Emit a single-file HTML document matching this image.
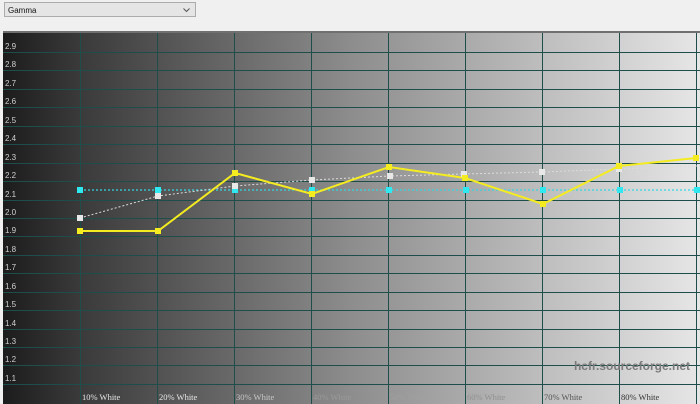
<!DOCTYPE html><html><head><style>
body{margin:0;width:700px;height:404px;background:#f0f0f0;overflow:hidden;font-family:"Liberation Sans",sans-serif;position:relative}
.sel{position:absolute;left:4px;top:2px;width:192px;height:15px;border:1px solid #acacac;background:#e5e5e5;font-size:8px;line-height:15px;box-sizing:border-box;padding-left:3px;color:#111}
</style></head><body>
<div class="sel">Gamma<svg style="position:absolute;right:5px;top:5px" width="7" height="5"><path d="M0.5 0.5L3.5 3.5L6.5 0.5" fill="none" stroke="#555" stroke-width="1"/></svg></div>
<svg style="position:absolute;left:0;top:0" width="700" height="404">
<defs><linearGradient id="g" x1="0" x2="1"><stop offset="0" stop-color="#1c1c1c"/><stop offset="0.11" stop-color="#3a3a3a"/><stop offset="0.5" stop-color="#8d8d8d"/><stop offset="0.8" stop-color="#c2c2c2"/><stop offset="1" stop-color="#e6e6e6"/></linearGradient></defs>
<rect x="0" y="30" width="700" height="374" fill="#f0f0f0"/>
<rect x="3" y="32" width="697" height="372" fill="url(#g)"/>
<line x1="3" y1="32" x2="700" y2="32" stroke="#707070" stroke-width="2"/>
<g stroke="#1e4e4a" stroke-width="1">
<line x1="80.5" y1="33" x2="80.5" y2="404"/><line x1="157.5" y1="33" x2="157.5" y2="404"/><line x1="234.5" y1="33" x2="234.5" y2="404"/><line x1="311.5" y1="33" x2="311.5" y2="404"/><line x1="388.5" y1="33" x2="388.5" y2="404"/><line x1="465.5" y1="33" x2="465.5" y2="404"/><line x1="542.5" y1="33" x2="542.5" y2="404"/><line x1="619.5" y1="33" x2="619.5" y2="404"/><line x1="696.5" y1="33" x2="696.5" y2="404"/>
</g>
<g stroke="#1e4e4a" stroke-width="1" id="h"></g>
<g font-family="Liberation Sans" font-size="8" fill="#d0d0d0" id="lb"></g>
<g font-family="Liberation Serif" font-size="8.5" fill="#e8e8e8">
<text x="82" y="400">10% White</text><text x="159" y="400">20% White</text><text x="236" y="400" fill="#c8c8c8">30% White</text><text x="313" y="400" fill="#9a9a9a">40% White</text><text x="390" y="400" fill="#a0a0a0">50% White</text><text x="467" y="400" fill="#909090">60% White</text><text x="544" y="400" fill="#555">70% White</text><text x="621" y="400" fill="#333">80% White</text></g>
<text x="690" y="370" text-anchor="end" font-family="Liberation Sans" font-weight="bold" font-size="12" fill="#7a7a7a">hcfr.sourceforge.net</text>
<polyline points="80,190 697,190" stroke="#30d8e0" stroke-width="1.2" stroke-dasharray="2,2" fill="none"/>
<polyline points="80,218 158,196 235,186 312,180 390,176 464,174 542,172 619,169 697,166" stroke="#dcdcdc" stroke-width="1" stroke-dasharray="2,2" fill="none"/>
<polyline points="80,231 158,231 235,173 312,194 389,167 465,178 543,204 619,166 696,158" stroke="#f4ec20" stroke-width="2" fill="none"/>
<g fill="#30e8f0"><rect x="77" y="187" width="6" height="6"/><rect x="155" y="187" width="6" height="6"/><rect x="232" y="187" width="6" height="6"/><rect x="309" y="187" width="6" height="6"/><rect x="386" y="187" width="6" height="6"/><rect x="463" y="187" width="6" height="6"/><rect x="540" y="187" width="6" height="6"/><rect x="617" y="187" width="6" height="6"/><rect x="694" y="187" width="6" height="6"/></g>
<g fill="#e8e8e8"><rect x="77" y="215" width="6" height="6"/><rect x="155" y="193" width="6" height="6"/><rect x="232" y="183" width="6" height="6"/><rect x="309" y="177" width="6" height="6"/><rect x="387" y="173" width="6" height="6"/><rect x="461" y="171" width="6" height="6"/><rect x="539" y="169" width="6" height="6"/><rect x="616" y="166" width="6" height="6"/></g>
<g fill="#f4ec20"><rect x="77" y="228" width="6" height="6"/><rect x="155" y="228" width="6" height="6"/><rect x="232" y="170" width="6" height="6"/><rect x="309" y="191" width="6" height="6"/><rect x="386" y="164" width="6" height="6"/><rect x="462" y="175" width="6" height="6"/><rect x="540" y="201" width="6" height="6"/><rect x="616" y="163" width="6" height="6"/><rect x="693" y="155" width="6" height="6"/></g>
</svg>
<script>
var h=document.getElementById('h'),lb=document.getElementById('lb'),ns='http://www.w3.org/2000/svg';
for(var i=0;i<19;i++){var v=2.9-i*0.1,y=52+i*18.44;var l=document.createElementNS(ns,'line');l.setAttribute('x1',3);l.setAttribute('x2',700);l.setAttribute('y1',Math.round(y)+0.5);l.setAttribute('y2',Math.round(y)+0.5);h.appendChild(l);
var t=document.createElementNS(ns,'text');t.setAttribute('x',5);t.setAttribute('y',Math.round(y)-3);t.textContent=v.toFixed(1);lb.appendChild(t);}
</script>
</body></html>
